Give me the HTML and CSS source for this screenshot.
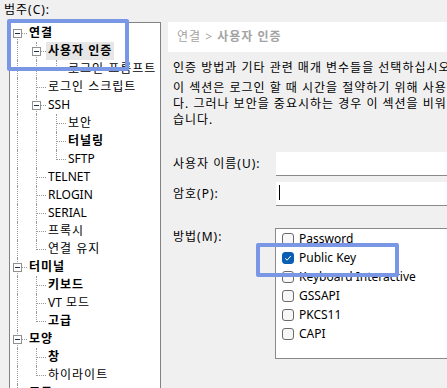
FILE: index.html
```html
<!DOCTYPE html>
<html lang="ko">
<head>
    <meta charset="UTF-8">
    <title>세션 속성 - 사용자 인증</title>
    <link rel="stylesheet" href="styles.css">
</head>
<body>

<div class="screen">
    <div class="left">
        <div class="cat-label">범주(C):</div>
        <div class="tree">
            <div class="node"><i class="g open top"><b></b></i><span class="txt bold">연결</span></div>
            <div class="node"><i class="g pipe"></i><i class="g open"><b></b></i><span class="txt bold sel">사용자 인증</span></div>
            <div class="node"><i class="g pipe"></i><i class="g pipe"></i><i class="g end"></i><span class="txt">로그인 프롬프트</span></div>
            <div class="node"><i class="g pipe"></i><i class="g tee"></i><span class="txt">로그인 스크립트</span></div>
            <div class="node"><i class="g pipe"></i><i class="g open"><b></b></i><span class="txt lat">SSH</span></div>
            <div class="node"><i class="g pipe"></i><i class="g pipe"></i><i class="g tee"></i><span class="txt">보안</span></div>
            <div class="node"><i class="g pipe"></i><i class="g pipe"></i><i class="g tee"></i><span class="txt bold">터널링</span></div>
            <div class="node"><i class="g pipe"></i><i class="g pipe"></i><i class="g end"></i><span class="txt lat">SFTP</span></div>
            <div class="node"><i class="g pipe"></i><i class="g tee"></i><span class="txt lat">TELNET</span></div>
            <div class="node"><i class="g pipe"></i><i class="g tee"></i><span class="txt lat">RLOGIN</span></div>
            <div class="node"><i class="g pipe"></i><i class="g tee"></i><span class="txt lat">SERIAL</span></div>
            <div class="node"><i class="g pipe"></i><i class="g tee"></i><span class="txt">프록시</span></div>
            <div class="node"><i class="g pipe"></i><i class="g end"></i><span class="txt">연결 유지</span></div>
            <div class="node"><i class="g open"><b></b></i><span class="txt bold">터미널</span></div>
            <div class="node"><i class="g pipe"></i><i class="g tee"></i><span class="txt bold">키보드</span></div>
            <div class="node"><i class="g pipe"></i><i class="g tee"></i><span class="txt"><span class="lat">VT</span> 모드</span></div>
            <div class="node"><i class="g pipe"></i><i class="g end"></i><span class="txt bold">고급</span></div>
            <div class="node"><i class="g open"><b></b></i><span class="txt bold">모양</span></div>
            <div class="node"><i class="g pipe"></i><i class="g tee"></i><span class="txt bold">창</span></div>
            <div class="node"><i class="g pipe"></i><i class="g end"></i><span class="txt">하이라이트</span></div>
            <div class="node"><i class="g open"><b></b></i><span class="txt bold">고급</span></div>
        </div>
    </div>

    <div class="right">
        <div class="crumb">연결 &gt; <strong>사용자 인증</strong></div>
        <p class="lead">인증 방법과 기타 관련 매개 변수들을 선택하십시오.</p>
        <p class="desc">이 섹션은 로그인 할 때 시간을 절약하기 위해 사용됩니<br>다. 그러나 보안을 중요시하는 경우 이 섹션을 비워 두는 것이 좋<br>습니다.</p>

        <div class="field">
            <label>사용자 이름(U):</label>
            <div class="input"></div>
        </div>
        <div class="field">
            <label>암호(P):</label>
            <div class="input"><span class="caret"></span></div>
        </div>
        <div class="field methods">
            <label>방법(M):</label>
            <div class="list">
                <div class="opt"><span class="check"></span>Password</div>
                <div class="opt"><span class="check on"><svg width="12" height="12" viewBox="0 0 12 12"><path d="M3.2 6.3 L5.1 8.2 L8.8 4" fill="none" stroke="#fff" stroke-width="1"/></svg></span>Public Key</div>
                <div class="opt"><span class="check"></span>Keyboard Interactive</div>
                <div class="opt"><span class="check"></span>GSSAPI</div>
                <div class="opt"><span class="check"></span>PKCS11</div>
                <div class="opt"><span class="check"></span>CAPI</div>
            </div>
        </div>
    </div>

    <div class="mark mark-tree"></div>
    <div class="mark mark-key"></div>
</div>

</body>
</html>
```

FILE: styles.css
```css
body {
    margin: 0;
    background: #f0f0f0;
    font-family: "Noto Sans", "Noto Sans CJK KR", sans-serif;
    font-size: 12px;
    color: #000;
    letter-spacing: 1px;
    overflow: hidden;
}
.screen {
    position: relative;
    display: flex;
    width: 447px;
    height: 388px;
    overflow: hidden;
}
.left {
    flex: none;
    width: 161px;
}
.cat-label {
    height: 22px;
    line-height: 19px;
    padding-left: 4px;
}
.tree {
    box-sizing: border-box;
    margin-left: 9px;
    width: 152px;
    height: 380px;
    padding-top: 1px;
    background: #fff;
    border: 1px solid #838383;
}
.node {
    display: flex;
    height: 18px;
}
.g {
    position: relative;
    flex: none;
    width: 19px;
    height: 18px;
}
.g:nth-child(3) {
    width: 20px;
}
.g::before,
.g::after {
    content: "";
    position: absolute;
}
.pipe::before,
.tee::before,
.end::before,
.open::before {
    left: 7px;
    top: 0;
    bottom: 0;
    border-left: 1px dotted #999;
}
.end::before {
    bottom: 8px;
}
.open.top::before {
    top: 9px;
}
.tee::after,
.end::after,
.open::after {
    left: 8px;
    right: 2px;
    top: 9px;
    border-top: 1px dotted #999;
}
.open::after {
    left: 12px;
}
.g:nth-child(3)::before {
    left: 8px;
}
.g:nth-child(3)::after {
    left: 9px;
}
.open b {
    position: absolute;
    left: 3px;
    top: 5px;
    width: 9px;
    height: 9px;
    box-sizing: border-box;
    border: 1px solid #919191;
    background: #fff;
    z-index: 1;
}
.open b::before {
    content: "";
    position: absolute;
    left: 1px;
    top: 3px;
    width: 5px;
    height: 1px;
    background: #1f2f4f;
}
.txt {
    margin-left: -2px;
    padding: 0 2px;
    line-height: 18px;
    white-space: nowrap;
}
.lat {
    letter-spacing: 0;
}
.bold {
    font-weight: bold;
}
.sel {
    background: #e6e6e6;
}
.right {
    flex: none;
    width: 340px;
    margin-left: 7px;
    padding-top: 22px;
}
.crumb {
    height: 30px;
    line-height: 30px;
    padding-left: 9px;
    background: #fff;
    color: #a3a3a3;
}
.lead {
    margin: 8px 0 0 5px;
    line-height: 16px;
    white-space: nowrap;
}
.desc {
    margin: 4px 0 24px 5px;
    line-height: 16px;
    white-space: nowrap;
}
.field {
    display: flex;
    align-items: center;
    margin-left: 5px;
}
.field + .field {
    margin-top: 6px;
}
.field label {
    flex: none;
    width: 103px;
    line-height: 18px;
}
.input {
    flex: 1;
    box-sizing: border-box;
    height: 24px;
    padding: 3px 0 0 3px;
    background: #fff;
    border-bottom: 1px solid #8a8a8a;
}
.caret {
    display: block;
    width: 1px;
    height: 15px;
    background: #000;
}
.field.methods {
    align-items: flex-start;
    margin-top: 22px;
}
.list {
    flex: 1;
    box-sizing: border-box;
    height: 131px;
    margin-left: -1px;
    background: #fff;
    border: 1px solid #8a8a8a;
}
.opt {
    display: flex;
    align-items: center;
    height: 19px;
    padding-left: 6px;
    white-space: nowrap;
    letter-spacing: 0;
}
.check {
    box-sizing: border-box;
    width: 12px;
    height: 12px;
    margin-right: 5px;
    border: 1px solid #6a6a6a;
    border-radius: 3px;
    background: #f7f7f7;
}
.check.on {
    border-color: #0a5fb4;
    background: #0a5fb4;
}
.check svg {
    display: block;
    margin: -1px;
}
.mark {
    position: absolute;
    box-sizing: border-box;
    border: 4px solid #7a97e6;
    border-radius: 2px;
}
.mark-tree {
    left: 7px;
    top: 19px;
    width: 122px;
    height: 52px;
}
.mark-key {
    left: 256px;
    top: 243px;
    width: 143px;
    height: 34px;
}
```
